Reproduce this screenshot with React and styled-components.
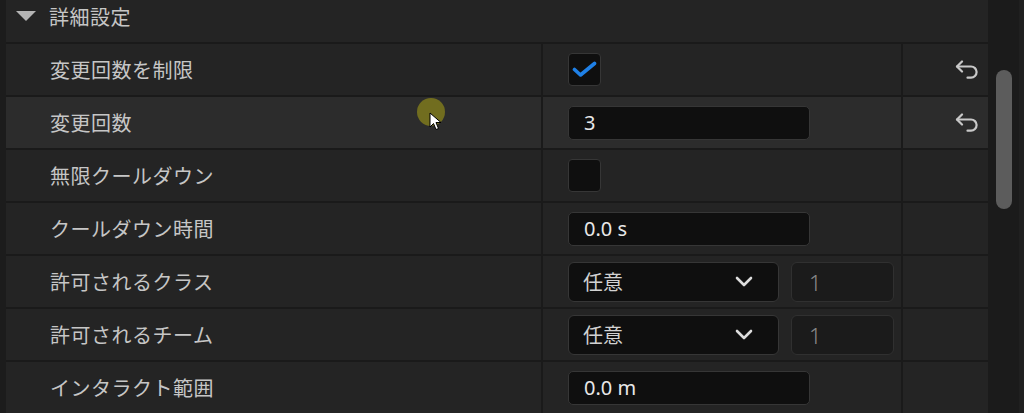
import React from 'react'
import styled, { createGlobalStyle } from 'styled-components'

const GlobalStyle = createGlobalStyle`
  html, body {
    margin: 0;
    padding: 0;
    background: #242424;
  }
  body {
    font-family: "Noto Sans CJK JP", "Noto Sans", sans-serif;
  }
`;

const Screen = styled.div`
  width: 1024px;
  height: 413px;
  display: flex;
  overflow: hidden;
  position: relative;
  background: #242424;
`;

const LeftStrip = styled.div`
  width: 6px;
  background: #1c1c1c;
`;

const Panel = styled.div`
  width: 982px;
  display: flex;
  flex-direction: column;
`;

const Header = styled.div`
  height: 32px;
  padding-bottom: 10px;
  display: flex;
  align-items: center;
  gap: 13px;
  padding-left: 10px;
  border-bottom: 2px solid #1a1a1a;
  color: #c6c6c6;
  font-size: 20px;
  letter-spacing: 0.5px;
  flex-shrink: 0;
`;

const Row = styled.div`
  height: 51px;
  display: flex;
  flex-shrink: 0;
  border-bottom: 2px solid #1a1a1a;
  background: ${p => (p.$hover ? '#2c2c2c' : '#242424')};
`;

const LabelCell = styled.div`
  width: 491px;
  padding-left: 44px;
  display: flex;
  align-items: center;
  color: #c6c6c6;
  font-size: 20px;
  letter-spacing: 0.5px;
  border-right: 2px solid #1a1a1a;
`;

const ValueCell = styled.div`
  width: 333px;
  padding-left: 25px;
  display: flex;
  align-items: center;
  gap: 12px;
  border-right: 2px solid #1a1a1a;
`;

const ResetCell = styled.div`
  flex: 1;
  display: flex;
  align-items: center;
  justify-content: flex-end;
  padding-right: 8px;
`;

const Check = styled.div`
  width: 31px;
  height: 31px;
  border: 1px solid #363636;
  border-radius: 4px;
  background: #0f0f0f;
  display: flex;
  align-items: center;
  justify-content: center;
`;

const TextInput = styled.div`
  width: 225px;
  height: 32px;
  padding-left: 15px;
  border: 1px solid #363636;
  border-radius: 5px;
  background: #0f0f0f;
  display: flex;
  align-items: center;
  color: #e8e8e8;
  font-family: "Noto Sans", sans-serif;
  font-size: 20px;
`;

const Select = styled.div`
  width: 170px;
  height: 38px;
  padding: 0 25px 0 14px;
  border: 1px solid #363636;
  border-radius: 6px;
  background: #0f0f0f;
  display: flex;
  align-items: center;
  justify-content: space-between;
  color: #d2d2d2;
  font-size: 20px;
`;

const NumberBox = styled.div`
  width: 84px;
  height: 38px;
  padding-left: 17px;
  border: 1px solid #303030;
  border-radius: 6px;
  background: #1b1b1b;
  display: flex;
  align-items: center;
  color: #8a8a8a;
  font-family: "Noto Sans", sans-serif;
  font-weight: 300;
  font-size: 22px;
`;

const Track = styled.div`
  width: 31px;
  background: #1b1b1b;
  padding-top: 70px;
  display: flex;
  justify-content: center;
`;

const Thumb = styled.div`
  width: 16px;
  height: 139px;
  border-radius: 8px;
  background: #5c5c5c;
`;

const EdgeStrip = styled.div`
  flex: 1;
  background: #202020;
`;

const Pointer = styled.div`
  position: absolute;
  left: 417px;
  top: 98px;
  width: 28px;
  height: 28px;
`;

const Halo = styled.div`
  width: 28px;
  height: 28px;
  border-radius: 50%;
  background: #716d1f;
`;

const Arrow = styled.svg`
  position: absolute;
  left: 12px;
  top: 14px;
`;

const Triangle = () => (
  <svg width="20" height="11" viewBox="0 0 20 11">
    <polygon points="0,0 20,0 10,10" fill="#b4b4b4" />
  </svg>
);

const CheckMark = () => (
  <svg width="25" height="17" viewBox="0 0 25 17">
    <polyline points="2.5,8.5 8.5,14 22.5,2.5" fill="none" stroke="#1f80e6" strokeWidth="3.6" strokeLinecap="round" strokeLinejoin="round" />
  </svg>
);

const Chevron = () => (
  <svg width="18" height="11" viewBox="0 0 18 11">
    <polyline points="2,2 9,9 16,2" fill="none" stroke="#dcdcdc" strokeWidth="2.6" strokeLinecap="round" strokeLinejoin="round" />
  </svg>
);

const Undo = () => (
  <svg width="25" height="20" viewBox="0 0 25 20">
    <g fill="none" stroke="#c8c8c8" strokeWidth="2.2" strokeLinecap="round" strokeLinejoin="round">
      <polyline points="7,1.5 2,6.5 7,11.5" />
      <path d="M2 6.5 H16 a5.6 5.6 0 0 1 0 11.2 H12.5" />
    </g>
  </svg>
);

const rows = [
  { label: '変更回数を制限', kind: 'check', checked: true, reset: true },
  { label: '変更回数', kind: 'input', value: '3', reset: true, hover: true },
  { label: '無限クールダウン', kind: 'check', checked: false },
  { label: 'クールダウン時間', kind: 'input', value: '0.0 s' },
  { label: '許可されるクラス', kind: 'select', value: '任意', num: '1' },
  { label: '許可されるチーム', kind: 'select', value: '任意', num: '1' },
  { label: 'インタラクト範囲', kind: 'input', value: '0.0 m' },
];

export default function App() {
  return (
    <>
      <GlobalStyle />
      <Screen>
        <LeftStrip />
        <Panel>
          <Header>
            <Triangle />
            詳細設定
          </Header>
          {rows.map(r => (
            <Row key={r.label} $hover={r.hover}>
              <LabelCell>{r.label}</LabelCell>
              <ValueCell>
                {r.kind === 'check' && <Check>{r.checked && <CheckMark />}</Check>}
                {r.kind === 'input' && <TextInput>{r.value}</TextInput>}
                {r.kind === 'select' && (
                  <>
                    <Select>
                      {r.value}
                      <Chevron />
                    </Select>
                    <NumberBox>{r.num}</NumberBox>
                  </>
                )}
              </ValueCell>
              <ResetCell>{r.reset && <Undo />}</ResetCell>
            </Row>
          ))}
        </Panel>
        <Track>
          <Thumb />
        </Track>
        <EdgeStrip />
        <Pointer>
          <Halo />
          <Arrow width="14" height="20" viewBox="0 0 14 20">
            <path d="M1 1 L1 15 L4.5 11.5 L7 17.5 L9.5 16.5 L7 10.5 L12 10.5 Z" fill="#ffffff" stroke="#000000" strokeWidth="1" strokeLinejoin="round" />
          </Arrow>
        </Pointer>
      </Screen>
    </>
  )
}
